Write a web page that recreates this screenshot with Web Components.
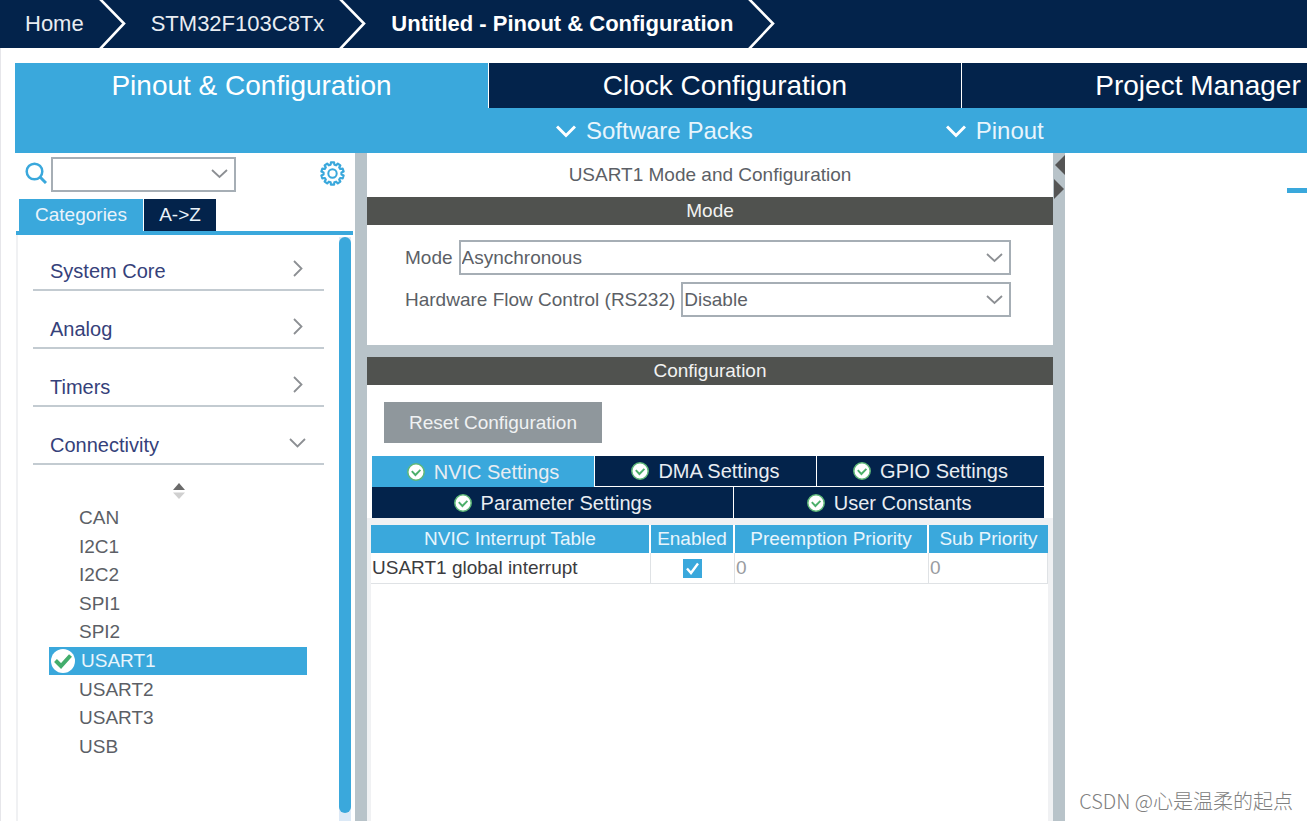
<!DOCTYPE html>
<html lang="en">
<head>
<meta charset="utf-8">
<title>Untitled - Pinout &amp; Configuration</title>
<style>
  html, body { margin: 0; height: 100%; background: #fff; }
  body {
    --navy: #03234b;
    --blue: #3aa8dc;
    --split: #b8c3c9;
    --bar: #50524f;
    --text: #5c5f66;
    --pale: #f0f1f3;
    font: 19px/28px "Liberation Sans", Arial, sans-serif;
    color: var(--text);
    overflow: hidden;
  }
</style>
</head>
<body>
<cube-app></cube-app>

<script>
const check = '<svg class="ok" viewBox="0 0 18 18" aria-hidden="true"><circle cx="9" cy="9" r="8.2" fill="#fff" stroke="#5fb878" stroke-width="1.5"/><path d="M4.8 8.2l3.6 3.8 5-5.2" fill="none" stroke="#4caf6a" stroke-width="1.9"/></svg>';
const base = `
  *, *::before { box-sizing: border-box; }
  button, select, input { font: inherit; color: inherit; margin: 0; border: 0; border-radius: 0; padding: 0; background: none; }
  button { cursor: pointer; white-space: nowrap; }
  a { color: inherit; text-decoration: none; }
  svg { display: block; flex: none; }
`;
function define(name, css, html, ready) {
  const template = document.createElement('template');
  template.innerHTML = `<style>${base}${css}</style>${html}`;
  customElements.define(name, class extends HTMLElement {
    connectedCallback() {
      if (this.shadowRoot) return;
      const root = this.attachShadow({ mode: 'open' });
      root.append(template.content.cloneNode(true));
      if (ready) ready(root, this);
    }
  });
}

/* Breadcrumb step closed by a large arrow */
define('cube-crumb', `
  :host { display: flex; align-items: center; gap: 15px; padding-left: 25px; white-space: nowrap; color: #e9edf2; }
  :host([current]) { font-weight: bold; color: #fff; }
`, `<a href="#"><slot></slot></a>
  <svg width="27" height="48" viewBox="0 0 27 48" aria-hidden="true"><path d="M1 -1L25 23.5L1 49" fill="none" stroke="#fff" stroke-width="2.6"/></svg>`);

define('cube-header', `
  :host { display: block; }
  nav { display: flex; height: 48px; background: var(--navy); font-size: 22px; line-height: 28px; }
`, `<nav aria-label="Breadcrumb">
    <cube-crumb>Home</cube-crumb><cube-crumb>STM32F103C8Tx</cube-crumb>
    <cube-crumb current>Untitled - Pinout &amp; Configuration</cube-crumb>
  </nav>`);

/* Main view tabs with the menu strip under them */
define('cube-views', `
  :host { display: block; background: var(--blue); overflow: hidden; }
  .tabs { display: grid; grid-template-columns: repeat(3, minmax(473px, 1fr)); height: 45px; }
  .tabs button { font-size: 28px; line-height: 32px; color: #fff; background: var(--navy); border-left: 1px solid #fff; }
  .tabs button[aria-selected=true] { background: var(--blue); border-left: 0; }
  .menus { display: flex; align-items: center; gap: 193px; height: 45px; padding-left: 541px; }
  .menus button { display: flex; align-items: center; gap: 10px; font-size: 24px; line-height: 32px; color: #e8f5fc; }
`, `<div class="tabs" role="tablist">
    <button role="tab" aria-selected="true">Pinout &amp; Configuration</button>
    <button role="tab">Clock Configuration</button>
    <button role="tab">Project Manager</button>
  </div>
  <div class="menus">
    <button><svg width="20" height="14" viewBox="0 0 20 14" aria-hidden="true"><path d="M1 2.5L10 11.5L19 2.5" fill="none" stroke="#fff" stroke-width="3"/></svg>Software Packs</button>
    <button><svg width="20" height="14" viewBox="0 0 20 14" aria-hidden="true"><path d="M1 2.5L10 11.5L19 2.5" fill="none" stroke="#fff" stroke-width="3"/></svg>Pinout</button>
  </div>`);

/* Labelled drop-down */
define('cube-select', `
  :host { display: flex; align-items: center; gap: 6px; }
  label { white-space: nowrap; }
  label:empty { display: none; }
  .box { flex: 1; display: grid; grid-template: 1fr / 1fr auto; align-items: center; height: 35px; }
  select { grid-area: 1 / 1 / 2 / 3; appearance: none; width: 100%; height: 100%; border: 2px solid #a6aeb5; padding-left: 1px; background: #fff; }
  svg { grid-area: 1 / 2; margin-right: 8px; pointer-events: none; }
`, `<label for="field"></label>
  <div class="box"><select id="field"><option></option></select>
  <svg width="17" height="10" viewBox="0 0 17 10" aria-hidden="true"><path d="M1 1L8.5 8L16 1" fill="none" stroke="#8c8f93" stroke-width="1.8"/></svg></div>`,
  (root, host) => {
    root.querySelector('label').textContent = host.getAttribute('label') || '';
    root.querySelector('option').textContent = host.getAttribute('value') || '';
    if (!host.hasAttribute('label')) root.querySelector('select').setAttribute('aria-label', 'Search');
  });

/* Collapsible category heading */
define('cube-category', `
  :host { display: block; }
  button { display: flex; align-items: center; justify-content: space-between; width: 100%; height: 56px; padding: 18px 18px 0 17px; border-bottom: 2px solid #c3cbd1; font-size: 20px; line-height: 28px; color: #35417a; }
  svg { margin-bottom: 6px; }
  :host([open]) svg { transform: rotate(90deg); }
`, `<button><slot></slot><svg width="17" height="17" viewBox="0 0 17 17" aria-hidden="true"><path d="M5 1L12.5 8.5L5 16" fill="none" stroke="#8c8f93" stroke-width="1.8"/></svg></button>`);

define('cube-peripheral', `
  :host { display: flex; align-items: center; padding-left: 2px; }
  a { padding-left: 28px; }
  .ok { display: none; width: 24px; height: 24px; }
  :host([selected]) { background: var(--blue); color: #e8f5fc; }
  :host([selected]) .ok { display: block; }
  :host([selected]) a { padding-left: 6px; }
`, `<svg class="ok" viewBox="0 0 24 24" aria-hidden="true"><circle cx="12" cy="12" r="12" fill="#fff"/><path d="M4.5 11.5L10 17L19.5 6.5" fill="none" stroke="#43ad6c" stroke-width="4"/></svg><a href="#"><slot></slot></a>`);

define('cube-sidebar', `
  :host { display: flex; flex-direction: column; min-width: 0; }
  .search { display: flex; align-items: center; height: 46px; padding: 0 10px; }
  .search cube-select { width: 185px; margin: 0 auto 4px 4px; }
  .search .find, .search .gear { margin-bottom: 6px; }
  .tabs { display: flex; gap: 1px; height: 32px; padding-left: 4px; color: #eaf3fa; }
  .tabs button { background: var(--navy); width: 72px; }
  .tabs button[aria-selected=true] { background: var(--blue); width: 124px; }
  .body { flex: 1; display: flex; margin: 0 2px 0 1px; border-top: 4px solid var(--blue); }
  .list { flex: 1; border-left: 2px solid var(--pale); padding: 0 15px; }
  .groups { display: grid; gap: 2px; }
  .sort { margin: 18px auto 5px; }
  .peripherals { display: grid; grid-auto-rows: 1fr; height: 257px; margin: 0 17px 0 16px; }
  .bar { display: flex; width: 12px; margin: 2px 2px 0 0; background: #dce9f6; }
  .thumb { flex: 1; margin-bottom: 8px; border-radius: 6px; background: var(--blue); }
`, `<div class="search">
    <svg class="find" width="22" height="22" viewBox="0 0 22 22" aria-hidden="true"><circle cx="9.5" cy="9.5" r="7.8" fill="none" stroke="#3aa8dc" stroke-width="2.5"/><path d="M15 15L21 21" stroke="#3aa8dc" stroke-width="3"/></svg>
    <cube-select></cube-select>
    <button class="gear" aria-label="Settings"></button>
  </div>
  <div class="tabs" role="tablist"><button role="tab" aria-selected="true">Categories</button><button role="tab">A-&gt;Z</button></div>
  <div class="body">
    <div class="list">
      <div class="groups">
        <cube-category>System Core</cube-category>
        <cube-category>Analog</cube-category>
        <cube-category>Timers</cube-category>
        <cube-category open>Connectivity</cube-category>
      </div>
      <svg class="sort" width="14" height="16" viewBox="0 0 14 16" aria-hidden="true"><path d="M1 7L7 0L13 7Z" fill="#6a6a6a"/><path d="M1 9.5L7 16L13 9.5Z" fill="#d0d0d0"/></svg>
      <div class="peripherals">
        <cube-peripheral>CAN</cube-peripheral><cube-peripheral>I2C1</cube-peripheral><cube-peripheral>I2C2</cube-peripheral>
        <cube-peripheral>SPI1</cube-peripheral><cube-peripheral>SPI2</cube-peripheral><cube-peripheral selected>USART1</cube-peripheral>
        <cube-peripheral>USART2</cube-peripheral><cube-peripheral>USART3</cube-peripheral><cube-peripheral>USB</cube-peripheral>
      </div>
    </div>
    <div class="bar"><div class="thumb"></div></div>
  </div>`,
  root => {
    /* Gear: ten rounded teeth on a ring */
    let d = '';
    for (let i = 0; i < 10; i++) {
      const at = (deg, r) => {
        const a = (i * 36 + deg - 90) * Math.PI / 180;
        return (12.5 + r * Math.cos(a)).toFixed(2) + ' ' + (12.5 + r * Math.sin(a)).toFixed(2);
      };
      d += (i ? 'L' : 'M') + at(-12, 9) + 'L' + at(-8, 11.3) + 'L' + at(8, 11.3) + 'L' + at(12, 9);
    }
    root.querySelector('.gear').innerHTML = `<svg width="25" height="25" viewBox="0 0 25 25" aria-hidden="true"><path d="${d}Z" fill="none" stroke="#3aa8dc" stroke-width="2.2" stroke-linejoin="round"/><circle cx="12.5" cy="12.5" r="4.2" fill="none" stroke="#3aa8dc" stroke-width="2"/></svg>`;
  });

define('cube-bar', `
  :host { display: block; height: 28px; background: var(--bar); color: #f2f2f2; text-align: center; }
`, `<slot></slot>`);

define('cube-tab', `
  :host { display: block; background: var(--navy); color: #e9edf2; }
  :host([upper]) { border-bottom: 1px solid #fff; }
  :host([selected]) { background: var(--blue); border-bottom: 0; }
  button { display: flex; align-items: center; justify-content: center; gap: 9px; width: 100%; height: 100%; font-size: 20px; line-height: 28px; }
  .ok { width: 18px; height: 18px; }
`, `<button role="tab">${check}<slot></slot></button>`);

define('cube-interrupts', `
  :host { display: block; }
  table { width: 100%; table-layout: fixed; border-spacing: 0; background: #fff; }
  th { height: 28px; padding: 0; font-weight: normal; color: #e8f5fc; background: var(--blue); border-right: 2px solid #fff; white-space: nowrap; }
  th:last-child { border-right: 0; }
  td { height: 31px; padding: 0 1px; border-right: 1px solid #dfe2e5; border-bottom: 1px solid #dfe2e5; color: #999ca1; white-space: nowrap; }
  td:first-child { color: #3c3c40; }
  .tick { display: grid; place-items: center; }
  .tick > * { grid-area: 1 / 1; }
  input { appearance: none; width: 19px; height: 19px; }
  input:checked { background: var(--blue); }
  svg { pointer-events: none; }
`, `<table>
    <colgroup><col style="width:280px"><col style="width:84px"><col style="width:194px"><col></colgroup>
    <thead><tr><th>NVIC Interrupt Table</th><th>Enabled</th><th>Preemption Priority</th><th>Sub Priority</th></tr></thead>
    <tbody><tr><td>USART1 global interrupt</td>
      <td><span class="tick"><input type="checkbox" checked aria-label="Enabled"><svg width="19" height="19" viewBox="0 0 19 19" aria-hidden="true"><path d="M4 9.5L8 14L15 4.5" fill="none" stroke="#fff" stroke-width="2.4"/></svg></span></td>
      <td>0</td><td>0</td></tr></tbody>
  </table>`);

define('cube-config', `
  :host { display: flex; flex-direction: column; min-width: 0; }
  .title { height: 44px; line-height: 44px; text-align: center; }
  .mode { display: grid; gap: 7px; padding: 15px 42px 28px 38px; border-bottom: 12px solid var(--split); }
  .reset { align-self: flex-start; margin: 17px 0 13px 17px; width: 218px; height: 41px; background: #8f979c; color: #f0f2f3; }
  .row { display: grid; grid-template-columns: 222fr 221fr 227fr; gap: 1px; height: 31px; margin: 0 9px 0 5px; }
  .row.lower { grid-template-columns: 7fr 6fr; }
  .area { flex: 1; display: flex; flex-direction: column; padding: 7px 5px 0 4px; background: var(--pale); }
  .fill { flex: 1; background: #fff; }
`, `<div class="title">USART1 Mode and Configuration</div>
  <cube-bar>Mode</cube-bar>
  <div class="mode">
    <cube-select label="Mode" value="Asynchronous"></cube-select>
    <cube-select label="Hardware Flow Control (RS232)" value="Disable"></cube-select>
  </div>
  <cube-bar>Configuration</cube-bar>
  <button class="reset">Reset Configuration</button>
  <div class="row" role="tablist"><cube-tab upper selected>NVIC Settings</cube-tab><cube-tab upper>DMA Settings</cube-tab><cube-tab upper>GPIO Settings</cube-tab></div>
  <div class="row lower" role="tablist"><cube-tab>Parameter Settings</cube-tab><cube-tab>User Constants</cube-tab></div>
  <div class="area"><cube-interrupts></cube-interrupts><div class="fill"></div></div>`);

define('cube-splitter', `
  :host { display: block; background: var(--split); }
  svg { margin: 2px 0 0 auto; }
  :host(:not([arrows])) svg { display: none; }
`, `<svg width="11" height="46" viewBox="0 0 11 46" aria-hidden="true"><path d="M11 0V20L1 10Z" fill="#555"/><path d="M0 24V44L10 34Z" fill="#555"/></svg>`);

define('cube-canvas', `
  :host { display: flex; flex-direction: column; align-items: flex-end; }
  .edge { width: 20px; height: 5px; margin-top: 35px; background: var(--blue); }
  .mark { margin: auto 14px 6px 0; font: 20px/28px "Noto Sans CJK SC", sans-serif; font-weight: 300; color: #808080; white-space: nowrap; }
`, `<div class="edge"></div><div class="mark">CSDN @心是温柔的起点</div>`);

define('cube-app', `
  :host { display: flex; flex-direction: column; min-height: 100vh; }
  main { flex: 1; display: flex; flex-direction: column; padding: 15px 0 0 14px; border-left: 1px solid #e6e6ea; }
  .work { flex: 1; display: grid; grid-template-columns: 340px 12px minmax(686px, 52%) 12px minmax(0, 1fr); }
`, `<cube-header></cube-header>
  <main>
    <cube-views></cube-views>
    <div class="work">
      <cube-sidebar></cube-sidebar><cube-splitter></cube-splitter>
      <cube-config></cube-config><cube-splitter arrows></cube-splitter><cube-canvas></cube-canvas>
    </div>
  </main>`);
</script>
</body>
</html>
